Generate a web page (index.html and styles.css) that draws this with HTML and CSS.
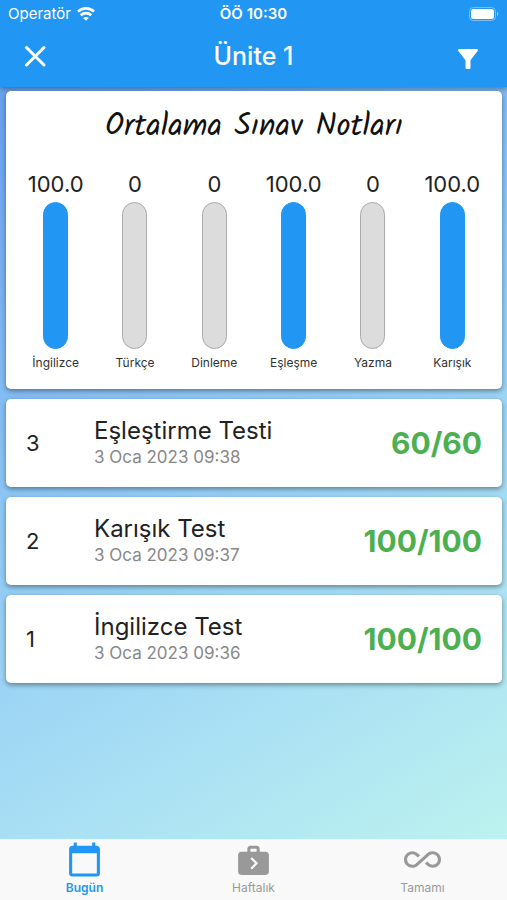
FILE: index.html
```html
<!DOCTYPE html>
<html lang="tr">

<head>
    <meta charset="UTF-8">
    <meta name="viewport" content="width=device-width, initial-scale=1.0">
    <title>Ünite 1</title>
    <link rel="stylesheet" href="styles.css">
</head>
<body>
    <header class="header">
        <div class="status">
            <div class="carrier">
                <span>Operatör</span>
                <svg width="18" height="14" viewBox="0 0 18 14" fill="none" stroke="#fff" stroke-width="2.6">
                    <path d="M1 4.7C5.4.2 12.6.2 17 4.7"/>
                    <path d="M3.8 8.2c2.9-2.8 7.5-2.8 10.4 0"/>
                    <path d="M9 13.8L6.2 11c1.5-1.5 4.1-1.5 5.6 0z" fill="#fff" stroke="none"/>
                </svg>
            </div>
            <span class="clock">ÖÖ 10:30</span>
            <svg class="battery" width="30" height="14" viewBox="0 0 30 14">
                <rect x="0.5" y="0.5" width="26" height="13" rx="4" fill="none" stroke="#fff" stroke-opacity=".4"/>
                <rect x="2" y="2" width="23" height="10" rx="2.5" fill="#fff"/>
                <path d="M28 4.8c1.8.6 1.8 3.8 0 4.4z" fill="#fff" fill-opacity=".5"/>
            </svg>
        </div>
        <div class="bar">
            <button class="icon-btn" aria-label="Kapat">
                <svg width="30" height="30" viewBox="0 0 30 30" stroke="#fff" stroke-width="3" stroke-linecap="round">
                    <path d="M6.5 6.5l17.5 17.5M24 6.5L6.5 24"/>
                </svg>
            </button>
            <h1>Ünite 1</h1>
            <button class="icon-btn filter" aria-label="Filtrele">
                <svg width="30" height="30" viewBox="0 0 24 24" fill="#fff">
                    <path d="M4.25 5.61C6.27 8.2 10 13 10 13v6c0 .55.45 1 1 1h2c.55 0 1-.45 1-1v-6s3.72-4.8 5.74-7.39C20.25 4.95 19.78 4 18.95 4H5.04c-.83 0-1.26.95-.79 1.61z"/>
                </svg>
            </button>
        </div>
    </header>

    <main class="content">
        <section class="card averages">
            <h2>Ortalama Sınav Notları</h2>
            <ul class="chart">
                <li><span class="value">100.0</span><span class="column full"></span><span class="name">İngilizce</span></li>
                <li><span class="value">0</span><span class="column"></span><span class="name">Türkçe</span></li>
                <li><span class="value">0</span><span class="column"></span><span class="name">Dinleme</span></li>
                <li><span class="value">100.0</span><span class="column full"></span><span class="name">Eşleşme</span></li>
                <li><span class="value">0</span><span class="column"></span><span class="name">Yazma</span></li>
                <li><span class="value">100.0</span><span class="column full"></span><span class="name">Karışık</span></li>
            </ul>
        </section>
        <article class="card test">
            <span class="no">3</span>
            <div class="info">
                <h3>Eşleştirme Testi</h3>
                <time>3 Oca 2023 09:38</time>
            </div>
            <strong class="score">60/60</strong>
        </article>
        <article class="card test">
            <span class="no">2</span>
            <div class="info">
                <h3>Karışık Test</h3>
                <time>3 Oca 2023 09:37</time>
            </div>
            <strong class="score">100/100</strong>
        </article>
        <article class="card test">
            <span class="no">1</span>
            <div class="info">
                <h3>İngilizce Test</h3>
                <time>3 Oca 2023 09:36</time>
            </div>
            <strong class="score">100/100</strong>
        </article>
    </main>

    <nav class="tabs">
        <a class="active" href="#bugun">
            <svg width="37" height="37" viewBox="0 0 24 24" fill="currentColor">
                <path d="M20 3h-1V1h-2v2H7V1H5v2H4c-1.1 0-2 .9-2 2v16c0 1.1.9 2 2 2h16c1.1 0 2-.9 2-2V5c0-1.1-.9-2-2-2zm0 18H4V8h16v13z"/>
            </svg>
            <span>Bugün</span>
        </a>
        <a href="#haftalik">
            <svg width="37" height="37" viewBox="0 0 24 24" fill="currentColor">
                <path d="M20 7h-4V5c0-.55-.22-1.05-.59-1.41C15.05 3.22 14.55 3 14 3h-4c-1.1 0-2 .9-2 2v2H4c-1.1 0-2 .9-2 2v11c0 1.1.9 2 2 2h16c1.1 0 2-.9 2-2V9c0-1.1-.9-2-2-2zM10 5h4v2h-4V5zm1 13.5l-1-1 3-3-3-3 1-1 4 4-4 4z"/>
            </svg>
            <span>Haftalık</span>
        </a>
        <a href="#tamami">
            <svg width="37" height="37" viewBox="0 0 24 24" fill="currentColor">
                <path d="M18.6 6.62c-1.44 0-2.8.56-3.77 1.53L12 10.66 10.48 12h.01L7.8 14.39c-.64.64-1.49.99-2.4.99-1.87 0-3.39-1.51-3.39-3.38S3.53 8.62 5.4 8.62c.91 0 1.76.35 2.44 1.03l1.13 1 1.51-1.34L9.22 8.2C8.2 7.18 6.84 6.62 5.4 6.62 2.42 6.62 0 9.04 0 12s2.42 5.38 5.4 5.38c1.44 0 2.8-.56 3.77-1.53l2.83-2.5.01.01L13.52 12h-.01l2.69-2.39c.64-.64 1.49-.99 2.4-.99 1.87 0 3.39 1.51 3.39 3.38s-1.52 3.38-3.39 3.38c-.9 0-1.76-.35-2.44-1.03l-1.14-1.01-1.51 1.34 1.27 1.12c1.02 1.01 2.37 1.57 3.82 1.57 2.98 0 5.4-2.41 5.4-5.38s-2.42-5.37-5.4-5.37z"/>
            </svg>
            <span>Tamamı</span>
        </a>
    </nav>
</body>
</html>
```
FILE: styles.css
```css
*{
    padding: 0;
    margin: 0;
    box-sizing: border-box;
}
body{
    min-height: 100vh;
    display: flex;
    flex-direction: column;
    font-family: Inter, "Noto Sans", sans-serif;
    color: #222;
    background: linear-gradient(150deg, #6ba2f0 10%, #8cc6f4 42%, #a9e0f4 72%, #bdf3ee 96%);
}
.header{
    background-color: #2196f3;
    color: #fff;
    height: 87px;
    box-shadow: 0 2px 5px rgba(0,0,0,0.35);
}
.status{
    display: grid;
    grid-template-columns: 1fr auto 1fr;
    align-items: center;
    height: 27px;
    padding: 0 8px;
    font-size: 15px;
}
.carrier{
    display: flex;
    align-items: center;
    gap: 6px;
}
.clock{
    font-weight: 600;
}
.battery{
    justify-self: end;
}
.bar{
    display: grid;
    grid-template-columns: 1fr auto 1fr;
    align-items: center;
    height: 58px;
    padding: 0 20px;
}
.bar h1{
    font-size: 25px;
    font-weight: 500;
}
.icon-btn{
    border: none;
    background: none;
    width: 30px;
    height: 30px;
    cursor: pointer;
}
.icon-btn svg{
    display: block;
}
.filter{
    justify-self: end;
    margin: 6px 4px 0 0;
}
.content{
    flex: 1;
    display: flex;
    flex-direction: column;
    gap: 10px;
    padding: 4px 5px 10px 6px;
}
.card{
    background-color: #fff;
    border-radius: 5px;
    box-shadow: 0 2px 5px rgba(0,0,0,0.4);
}
.averages{
    padding: 14px 10px 16px;
}
.averages h2{
    font-family: Kalam, "Comic Neue", cursive;
    font-weight: 400;
    font-size: 31px;
    line-height: 44px;
    text-align: center;
    color: #111;
}
.chart{
    display: grid;
    grid-template-columns: repeat(6, 1fr);
    list-style: none;
    padding-top: 20px;
}
.chart li{
    display: flex;
    flex-direction: column;
    align-items: center;
}
.value{
    font-size: 22px;
    line-height: 30px;
}
.column{
    width: 25px;
    height: 147px;
    margin: 3px 0 4px;
    border: 1px solid #aaa;
    border-radius: 13px;
    background-color: #dcdcdc;
}
.column.full{
    border-color: #2196f3;
    background-color: #2196f3;
}
.name{
    font-size: 12px;
    line-height: 20px;
    color: #333;
}
.test{
    display: flex;
    align-items: center;
    height: 88px;
    padding: 0 20px;
}
.no{
    width: 68px;
    font-size: 22px;
}
.info{
    flex: 1;
    padding-bottom: 3px;
}
.info h3{
    font-size: 24px;
    font-weight: 400;
    line-height: 30px;
}
.info time{
    display: block;
    font-size: 17px;
    line-height: 22px;
    color: #888;
}
.score{
    font-size: 30px;
    font-weight: 700;
    color: #4caf50;
}
.tabs{
    display: grid;
    grid-template-columns: repeat(3, 1fr);
    height: 61px;
    padding-top: 2px;
    background-color: #f9f9f9;
}
.tabs a{
    display: flex;
    flex-direction: column;
    align-items: center;
    color: #999;
    font-size: 12px;
    line-height: 20px;
    text-decoration: none;
}
.tabs .active{
    color: #2196f3;
    font-weight: 600;
}
```
